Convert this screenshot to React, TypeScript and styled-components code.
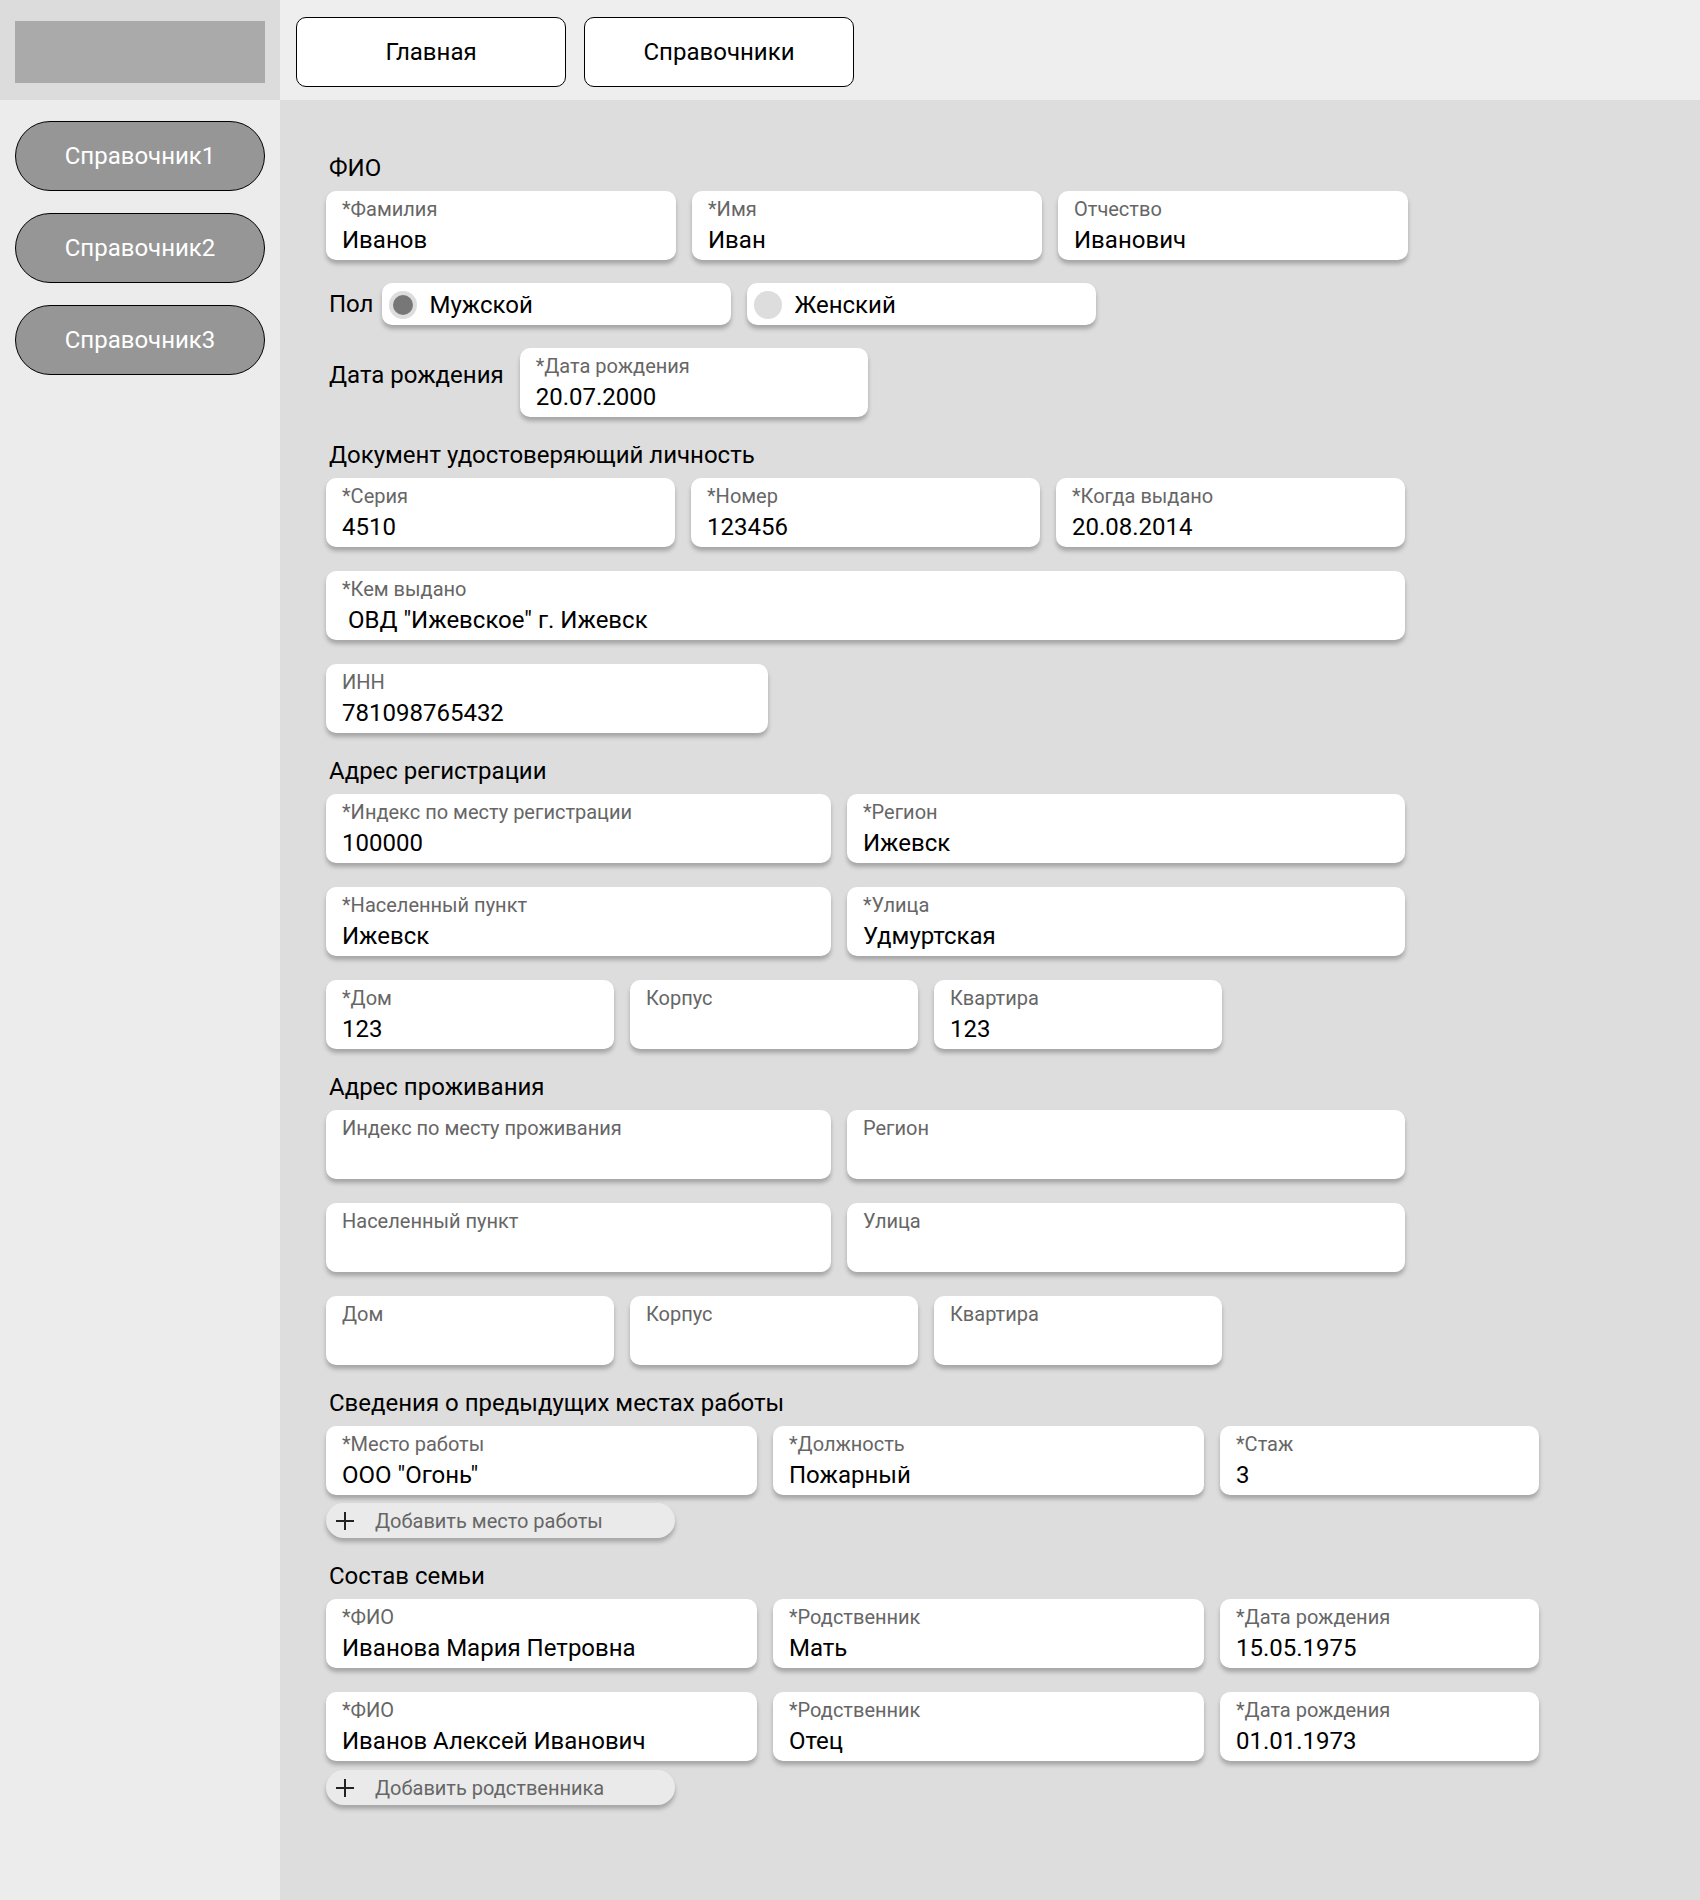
import styled, { createGlobalStyle } from 'styled-components';

const GlobalStyle = createGlobalStyle`
  html, body {
    margin: 0;
    padding: 0;
  }
  body {
    font-family: Roboto, 'Noto Sans', sans-serif;
    color: #000;
  }
  * {
    box-sizing: border-box;
  }
`;

const Layout = styled.div`
  display: grid;
  grid-template-columns: 280px 1fr;
  grid-template-rows: 100px 1fr;
  min-height: 1900px;
  width: 1700px;
`;

const LogoCell = styled.div`
  background: #dcdcdc;
  padding: 21px 15px;
`;

const Logo = styled.div`
  width: 250px;
  height: 62px;
  background: #aaaaaa;
`;

const Header = styled.header`
  background: #eeeeee;
  display: flex;
  align-items: flex-start;
  gap: 18px;
  padding: 17px 16px;
`;

const NavButton = styled.button`
  width: 270px;
  height: 70px;
  background: #fff;
  border: 1px solid #000;
  border-radius: 10px;
  font-family: Roboto, sans-serif;
  font-size: 24px;
  color: #000;
  cursor: pointer;
`;

const Sidebar = styled.aside`
  background: #ececec;
  display: flex;
  flex-direction: column;
  gap: 22px;
  padding: 21px 15px;
`;

const SideButton = styled.button`
  width: 250px;
  height: 70px;
  background: #969696;
  border: 1px solid #000;
  border-radius: 35px;
  font-family: Roboto, sans-serif;
  font-size: 24px;
  color: #fff;
  cursor: pointer;
`;

const Main = styled.main`
  background: #dddddd;
  padding: 54px 46px 80px;
`;

const Stack = styled.div<{ $gap?: number }>`
  display: flex;
  flex-direction: column;
  gap: ${(p) => p.$gap ?? 24}px;
`;

const Section = styled.section`
  display: flex;
  flex-direction: column;
  gap: 9px;
`;

const Title = styled.h2`
  margin: 0 0 0 3px;
  font-size: 24px;
  line-height: 28px;
  font-weight: 400;
`;

const Row = styled.div<{ $top?: boolean }>`
  display: flex;
  align-items: ${(p) => (p.$top ? 'flex-start' : 'center')};
  gap: 16px;
`;

const Field = styled.div<{ $w: number }>`
  width: ${(p) => p.$w}px;
  height: 69px;
  background: #fff;
  border-radius: 10px;
  box-shadow: 0 4px 4px rgba(0, 0, 0, 0.25);
  padding: 7px 16px 0;
  display: flex;
  flex-direction: column;
  gap: 5px;
`;

const FieldLabel = styled.span`
  font-size: 20px;
  line-height: 23px;
  color: #666;
`;

const FieldValue = styled.span`
  font-size: 24px;
  line-height: 28px;
  color: #000;
  white-space: pre;
`;

const InlineLabel = styled.span<{ $offset?: number }>`
  font-size: 24px;
  line-height: 28px;
  margin-left: 3px;
  margin-top: ${(p) => p.$offset ?? 0}px;
`;

const RadioGroup = styled.div`
  display: flex;
  align-items: center;
  gap: 8px;
`;

const RadioBox = styled.label`
  width: 349px;
  height: 42px;
  background: #fff;
  border-radius: 10px;
  box-shadow: 0 4px 4px rgba(0, 0, 0, 0.25);
  display: flex;
  align-items: center;
  gap: 13px;
  padding: 2px 0 0 7px;
  font-size: 24px;
`;

const RadioDot = styled.span<{ $checked?: boolean }>`
  width: 28px;
  height: 28px;
  border-radius: 50%;
  background: #dddddd;
  display: flex;
  align-items: center;
  justify-content: center;
  &::after {
    content: '';
    width: 20px;
    height: 20px;
    border-radius: 50%;
    background: ${(p) => (p.$checked ? '#777777' : 'transparent')};
  }
`;

const AddButton = styled.button`
  width: 349px;
  height: 35px;
  background: #eaeaea;
  border: none;
  border-radius: 18px;
  box-shadow: 0 4px 4px rgba(0, 0, 0, 0.25);
  display: flex;
  align-items: center;
  gap: 20px;
  padding: 0 9px;
  font-family: Roboto, sans-serif;
  font-size: 20px;
  color: #666;
  cursor: pointer;
`;

function PlusIcon() {
  return (
    <svg width='20' height='20' viewBox='0 0 20 20'>
      <path d='M10 1v18M1 10h18' stroke='#222' strokeWidth='2' fill='none' />
    </svg>
  );
}

type TField = {
  label: string;
  value?: string;
  w: number;
};

function Fields({ items }: { items: TField[] }) {
  return (
    <Row>
      {items.map(({ label, value, w }, i) => (
        <Field key={`${label}_${i}`} $w={w}>
          <FieldLabel>{label}</FieldLabel>
          {value && <FieldValue>{value}</FieldValue>}
        </Field>
      ))}
    </Row>
  );
}

export default function App() {
  return (
    <>
      <GlobalStyle />
      <Layout>
        <LogoCell>
          <Logo />
        </LogoCell>
        <Header>
          <NavButton>Главная</NavButton>
          <NavButton>Справочники</NavButton>
        </Header>
        <Sidebar>
          <SideButton>Справочник1</SideButton>
          <SideButton>Справочник2</SideButton>
          <SideButton>Справочник3</SideButton>
        </Sidebar>
        <Main>
          <Stack>
            <Stack $gap={23}>
              <Section>
                <Title>ФИО</Title>
                <Fields
                  items={[
                    { label: '*Фамилия', value: 'Иванов', w: 350 },
                    { label: '*Имя', value: 'Иван', w: 350 },
                    { label: 'Отчество', value: 'Иванович', w: 350 },
                  ]}
                />
              </Section>

              <RadioGroup>
                <InlineLabel>Пол</InlineLabel>
                <Row>
                  <RadioBox>
                    <RadioDot $checked />
                    Мужской
                  </RadioBox>
                  <RadioBox>
                    <RadioDot />
                    Женский
                  </RadioBox>
                </Row>
              </RadioGroup>

              <Row $top>
                <InlineLabel $offset={13}>Дата рождения</InlineLabel>
                <Field $w={348}>
                  <FieldLabel>*Дата рождения</FieldLabel>
                  <FieldValue>20.07.2000</FieldValue>
                </Field>
              </Row>
            </Stack>

            <Section>
              <Title>Документ удостоверяющий личность</Title>
              <Stack>
                <Fields
                  items={[
                    { label: '*Серия', value: '4510', w: 349 },
                    { label: '*Номер', value: '123456', w: 349 },
                    { label: '*Когда выдано', value: '20.08.2014', w: 349 },
                  ]}
                />
                <Fields items={[{ label: '*Кем выдано', value: ' ОВД "Ижевское" г. Ижевск', w: 1079 }]} />
                <Fields items={[{ label: 'ИНН', value: '781098765432', w: 442 }]} />
              </Stack>
            </Section>

            <Section>
              <Title>Адрес регистрации</Title>
              <Stack>
                <Fields
                  items={[
                    { label: '*Индекс по месту регистрации', value: '100000', w: 505 },
                    { label: '*Регион', value: 'Ижевск', w: 558 },
                  ]}
                />
                <Fields
                  items={[
                    { label: '*Населенный пункт', value: 'Ижевск', w: 505 },
                    { label: '*Улица', value: 'Удмуртская', w: 558 },
                  ]}
                />
                <Fields
                  items={[
                    { label: '*Дом', value: '123', w: 288 },
                    { label: 'Корпус', w: 288 },
                    { label: 'Квартира', value: '123', w: 288 },
                  ]}
                />
              </Stack>
            </Section>

            <Section>
              <Title>Адрес проживания</Title>
              <Stack>
                <Fields
                  items={[
                    { label: 'Индекс по месту проживания', w: 505 },
                    { label: 'Регион', w: 558 },
                  ]}
                />
                <Fields
                  items={[
                    { label: 'Населенный пункт', w: 505 },
                    { label: 'Улица', w: 558 },
                  ]}
                />
                <Fields
                  items={[
                    { label: 'Дом', w: 288 },
                    { label: 'Корпус', w: 288 },
                    { label: 'Квартира', w: 288 },
                  ]}
                />
              </Stack>
            </Section>

            <Section>
              <Title>Сведения о предыдущих местах работы</Title>
              <Stack $gap={8}>
                <Fields
                  items={[
                    { label: '*Место работы', value: 'ООО "Огонь"', w: 431 },
                    { label: '*Должность', value: 'Пожарный', w: 431 },
                    { label: '*Стаж', value: '3', w: 319 },
                  ]}
                />
                <AddButton>
                  <PlusIcon />
                  Добавить место работы
                </AddButton>
              </Stack>
            </Section>

            <Section>
              <Title>Состав семьи</Title>
              <Stack $gap={9}>
                <Stack>
                  <Fields
                    items={[
                      { label: '*ФИО', value: 'Иванова Мария Петровна', w: 431 },
                      { label: '*Родственник', value: 'Мать', w: 431 },
                      { label: '*Дата рождения', value: '15.05.1975', w: 319 },
                    ]}
                  />
                  <Fields
                    items={[
                      { label: '*ФИО', value: 'Иванов Алексей Иванович', w: 431 },
                      { label: '*Родственник', value: 'Отец', w: 431 },
                      { label: '*Дата рождения', value: '01.01.1973', w: 319 },
                    ]}
                  />
                </Stack>
                <AddButton>
                  <PlusIcon />
                  Добавить родственника
                </AddButton>
              </Stack>
            </Section>
          </Stack>
        </Main>
      </Layout>
    </>
  );
}
